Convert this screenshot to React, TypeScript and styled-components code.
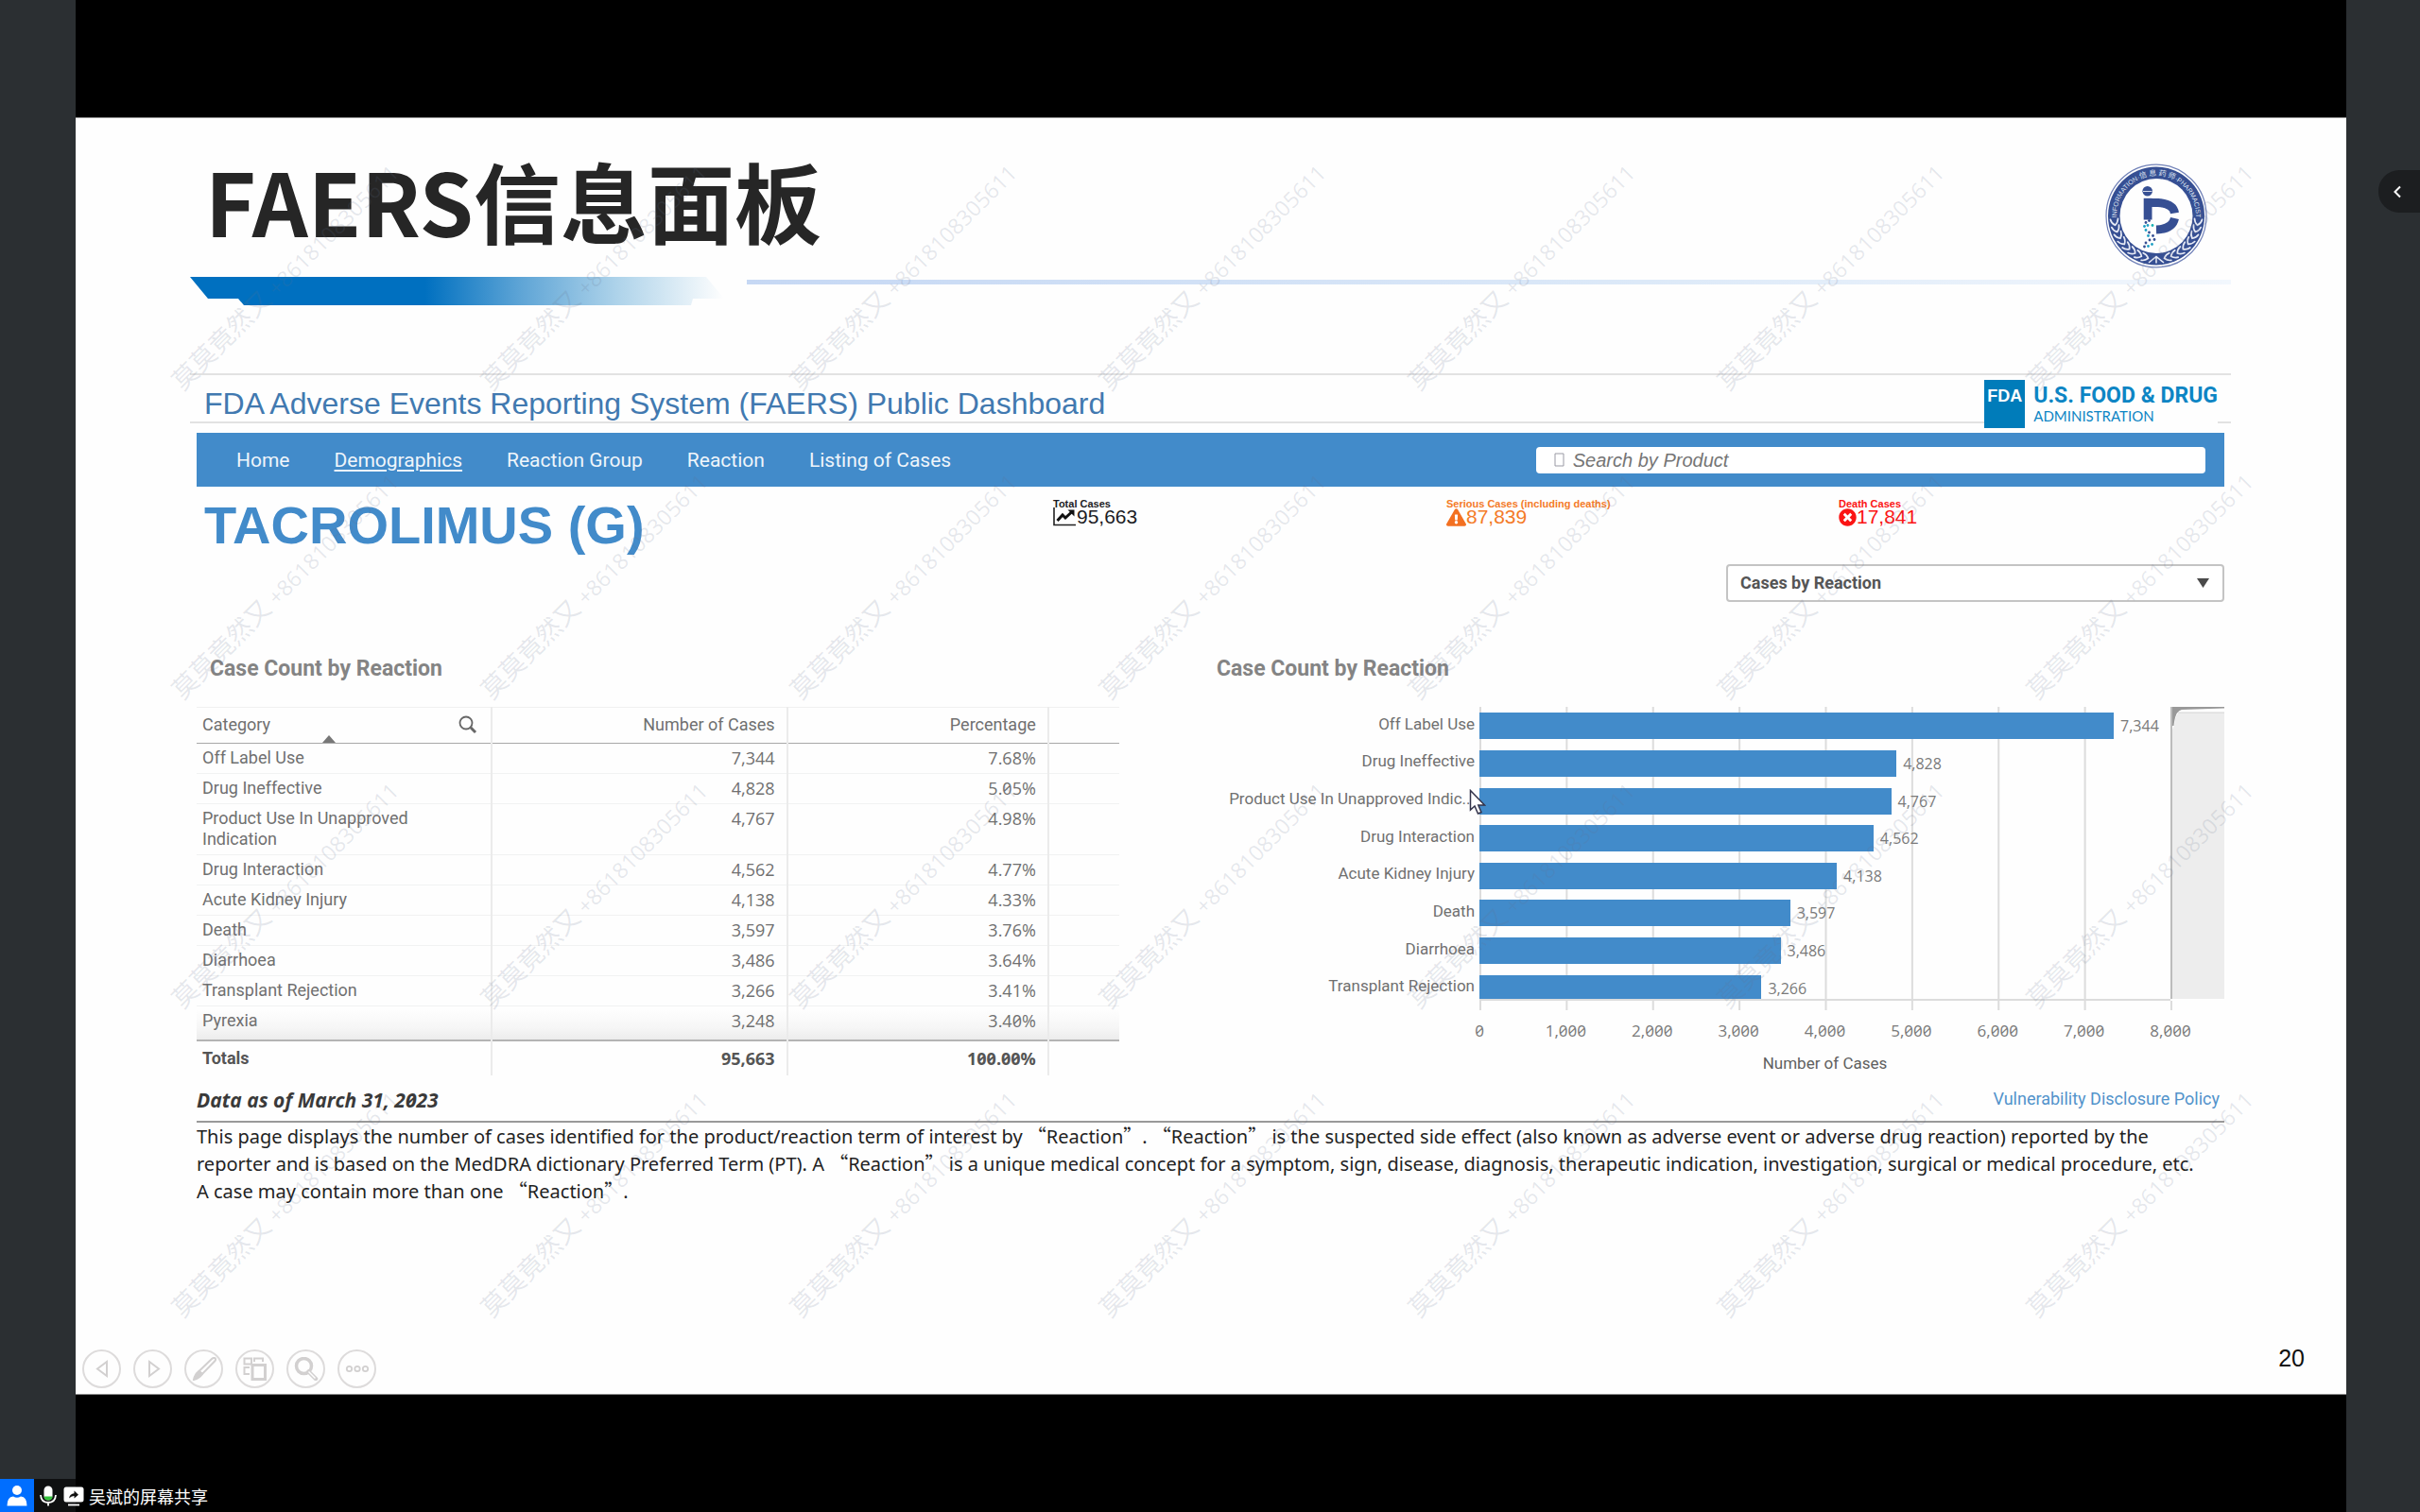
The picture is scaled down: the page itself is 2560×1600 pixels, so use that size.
import React from "react";
import styled, { createGlobalStyle } from "styled-components";
import { FaExclamationTriangle, FaTimesCircle } from "react-icons/fa";

const UI = `Roboto, "Noto Sans CJK SC", sans-serif`;
const ARIAL = `"Liberation Sans", Arial, sans-serif`;
const HUMANIST = `"Open Sans", "Noto Sans", sans-serif`;
const CJK = `"Noto Sans CJK SC", sans-serif`;
const BLUE = "#428bca";

const GlobalStyle = createGlobalStyle`
  *, *::before, *::after { box-sizing: border-box; }
  body { margin: 0; background: #2b2f32; font-family: ${UI}; }
  h1, h2, h3, p, ul, ol, dl, dd { margin: 0; padding: 0; }
  ul, ol { list-style: none; }
  button { font: inherit; padding: 0; border: 0; cursor: pointer; }
`;

const Meeting = styled.div`
  position: relative;
  display: grid;
  grid-template-columns: 80px minmax(0, 1fr) 78px;
  min-height: 100vh;
`;

const Stage = styled.main`
  grid-column: 2;
  display: flex;
  flex-direction: column;
  justify-content: center;
  background: #000;
`;

const Slide = styled.article`
  position: relative;
  display: flex;
  flex-direction: column;
  aspect-ratio: 16 / 9;
  padding-top: 40px;
  background: #fefefe;
  border: solid #8a8a8a;
  border-width: 1px 0;
`;

/* ---------- slide heading ---------- */

const SlideHeader = styled.header`
  display: flex;
  justify-content: space-between;
  align-items: flex-start;
  height: 128px;
  padding: 0 147px 0 137px;
`;

const SlideTitle = styled.h1`
  font: bold 92px/92px ${CJK};
  color: #262626;
`;

const SealWrap = styled.div`
  padding-top: 8px;
`;

const Ribbon = styled.div`
  display: grid;
  grid-template-columns: 589px 1fr;
  padding: 0 122px 0 121px;
  height: 30px;

  svg { display: block; }
`;

const RibbonLine = styled.div`
  height: 5px;
  margin-top: 3px;
  background: linear-gradient(to right, #c6d8f4, #dce9f8 60%, #f2f7fd);
`;

/* ---------- dashboard ---------- */

const Dashboard = styled.section`
  padding: 72px 129px 0 128px;
`;

const Masthead = styled.header`
  display: flex;
  justify-content: space-between;
  height: 53px;
  margin: 0 -7px;
  padding: 5px 14px 0 15px;
  border: solid #e2e2e2;
  border-width: 2px 0;
`;

const MastTitle = styled.h2`
  font: normal 32px/38px ${ARIAL};
  padding-top: 6px;
  color: #4179b0;
`;

const FdaLogo = styled.div`
  display: flex;
  height: 51px;
  background: #fefefe;
`;

const FdaMark = styled.div`
  width: 43px;
  padding-top: 7px;
  background: #007cba;
  color: #fff;
  font: bold 18px/20px ${ARIAL};
  text-align: center;
`;

const FdaWords = styled.div`
  padding: 5px 0 0 9px;
  color: #0d85c4;
`;

const FdaName = styled.div`
  font: bold 23px/24px ${UI};
`;

const FdaSub = styled.div`
  font: 15px/18px Lato, sans-serif;
`;

const NavBar = styled.nav`
  display: flex;
  align-items: center;
  justify-content: space-between;
  height: 57px;
  margin-top: 10px;
  padding: 0 20px 0 42px;
  background: ${BLUE};
`;

const NavList = styled.ul`
  display: flex;
  gap: 47px;
`;

const NavLink = styled.a<{ $active?: boolean }>`
  font: 21px/28px ${UI};
  color: #eef5fb;
  text-decoration: ${(p) => (p.$active ? "underline" : "none")};
  text-underline-offset: 3px;
`;

const SearchBox = styled.label`
  display: flex;
  align-items: center;
  gap: 9px;
  width: 34%;
  height: 28px;
  padding-left: 19px;
  background: #fff;
  border-radius: 4px;

  svg { flex: none; }
`;

const SearchInput = styled.input`
  flex: 1;
  min-width: 0;
  padding: 0;
  border: 0;
  outline: 0;
  background: none;
  font: italic 20px/26px ${ARIAL};

  &::placeholder { color: #757575; opacity: 1; }
`;

const Summary = styled.div`
  display: grid;
  grid-template-columns: 906fr 416fr 415fr 408fr;
  padding-top: 12px;
`;

const Drug = styled.h2`
  padding-left: 8px;
  font: bold 56px/58px ${ARIAL};
  color: ${BLUE};
`;

const Kpi = styled.dl<{ $color: string }>`
  color: ${(p) => p.$color};
`;

const KpiLabel = styled.dt`
  font: bold 11px/12px ${ARIAL};
`;

const KpiValue = styled.dd`
  display: flex;
  align-items: center;
  height: 16px;
  font: 21px/16px ${ARIAL};
`;

const SelectWrap = styled.div`
  position: relative;
  width: 527px;
  margin: 12px 0 0 auto;

  svg {
    position: absolute;
    right: 16px;
    top: 15px;
    pointer-events: none;
  }
`;

const Select = styled.select`
  appearance: none;
  width: 100%;
  height: 40px;
  padding: 0 13px;
  border: 2px solid #c4c4c4;
  border-radius: 4px;
  background: #fff;
  color: #555;
  font: bold 18px/24px ${UI};
`;

const Panels = styled.div`
  display: grid;
  grid-template-columns: 976fr 1066fr;
  column-gap: 103px;
  margin-top: 57px;
`;

const PanelTitle = styled.h3<{ $inset?: boolean }>`
  margin-bottom: 26px;
  padding-left: ${(p) => (p.$inset ? "14px" : "0")};
  font: bold 23px/28px ${UI};
  color: #848484;
`;

/* ---------- table ---------- */

const Table = styled.table`
  width: 100%;
  table-layout: fixed;
  border-collapse: collapse;
  border-top: 1px solid #f0f0f0;
  color: #707070;
`;

const Head = styled.th<{ $num?: boolean }>`
  height: 38px;
  padding: 0 12px 2px 6px;
  border-right: 2px solid #ebebeb;
  border-bottom: 1px solid #a8a8a8;
  font: 18px/22px ${UI};
  text-align: ${(p) => (p.$num ? "right" : "left")};

  &:last-child { border-right: 0; }
`;

const HeadInner = styled.div`
  position: relative;
  display: flex;
  align-items: center;
  justify-content: space-between;
  height: 35px;
  padding-right: 2px;
`;

const SortMark = styled.span`
  position: absolute;
  left: 127px;
  bottom: -2px;
  border: solid transparent;
  border-width: 0 7px 8px;
  border-bottom-color: #777;
`;

const Row = styled.tr<{ $fade?: boolean }>`
  background: ${(p) => (p.$fade ? "linear-gradient(#fefefe 10%, #f6f6f6 65%, #ececec)" : "none")};
  border-bottom: ${(p) => (p.$fade ? "2px solid #b4b4b4" : "1px solid #f1f2f2")};

  td { padding-bottom: ${(p) => (p.$fade ? "9px" : "5px")}; }
`;

const Cell = styled.td<{ $num?: boolean; $total?: boolean }>`
  height: 32px;
  padding: 4px ${(p) => (p.$num ? "12px" : "60px")} 5px 6px;
  border-right: 2px solid #ebebeb;
  vertical-align: top;
  font: ${(p) => (p.$total ? "bold" : "normal")} 18px/22px ${(p) => (p.$num ? HUMANIST : UI)};
  font-variant-numeric: slashed-zero;
  text-align: ${(p) => (p.$num ? "right" : "left")};

  &:last-child { border-right: 0; }
`;

const TotalsRow = styled.tr`
  color: #555;

  td { padding-top: 7px; padding-bottom: 7px; }
`;

/* ---------- chart ---------- */

const Chart = styled.div`
  display: grid;
  grid-template-columns: 278px 1fr 57px;
`;

const BarLabels = styled.ul`
  display: grid;
  grid-template-rows: repeat(8, 1fr);
  height: 317px;
`;

const BarLabel = styled.li`
  display: flex;
  align-items: center;
  justify-content: flex-end;
  padding: 0 5px 5px 0;
  font: 17px/22px ${UI};
  color: #707070;
  white-space: nowrap;
`;

const PlotColumn = styled.div`
  position: relative;
`;

const Plot = styled.div`
  height: 311px;
  overflow: hidden;
  background: linear-gradient(to right, #dcdcdc 2px, transparent 2px) 0 0 / 12.5% 100%;
  border-bottom: 2px solid #dcdcdc;
`;

const Bars = styled.ul`
  display: grid;
  grid-template-rows: repeat(8, 1fr);
  height: 317px;
`;

const BarRow = styled.li`
  display: flex;
  align-items: center;
  gap: 7px;
`;

const Bar = styled.div`
  height: 28px;
  background: ${BLUE};
`;

const BarValue = styled.span`
  font: 16px/20px ${HUMANIST};
  color: #7a7a7a;
`;

const Ticks = styled.div`
  height: 10px;
  margin-right: -2px;
  background: linear-gradient(to right, #dcdcdc 2px, transparent 2px) 0 0 / calc((100% - 2px) / 8) 100%;
`;

const TickLabels = styled.ol`
  display: grid;
  grid-template-columns: repeat(9, 1fr);
  margin: 10px -6.25% 0;
  font: 17px/24px ${HUMANIST};
  font-variant-numeric: slashed-zero;
  color: #7a7a7a;
  text-align: center;
`;

const AxisTitle = styled.p`
  margin-top: 10px;
  font: 17px/24px ${UI};
  color: #606060;
  text-align: center;
`;

const MiniMap = styled.div`
  height: 309px;
  background: #ededed;
  border-left: 2px solid #bcbcbc;

  svg { display: block; }
`;

const Pointer = styled.svg`
  position: absolute;
  left: -11px;
  top: 87px;
`;

/* ---------- notes ---------- */

const Stamp = styled.div`
  display: flex;
  justify-content: space-between;
  height: 38px;
  margin-top: 12px;
  border-bottom: 2px solid #999;
`;

const StampDate = styled.p`
  font: italic bold 21px/28px ${HUMANIST};
  font-variant-numeric: slashed-zero;
  color: #3a3a3a;
`;

const PolicyLink = styled.a`
  padding-right: 5px;
  font: 18px/26px ${UI};
  color: #5293cb;
  text-decoration: none;
`;

const Note = styled.p`
  font: 20px/28px "Noto Sans", sans-serif;
  color: #222;
`;

const Quote = styled.span`
  font-family: ${CJK};
`;

/* ---------- slide footer ---------- */

const SlideFooter = styled.footer`
  display: flex;
  align-items: flex-end;
  justify-content: space-between;
  margin-top: auto;
  padding: 0 44px 6px 7px;
`;

const Controls = styled.div`
  display: flex;
  gap: 13px;
`;

const ControlButton = styled.button`
  display: grid;
  place-items: center;
  width: 41px;
  height: 41px;
  border: 2px solid #dddbdb;
  border-radius: 50%;
  background: transparent;
`;

const PageNumber = styled.span`
  padding-bottom: 18px;
  font: 25px/28px ${ARIAL};
  color: #111;
`;

/* ---------- watermark ---------- */

const Watermarks = styled.div`
  position: absolute;
  top: -34px;
  left: 117px;
  display: grid;
  grid-template-columns: repeat(7, 327px);
  grid-auto-rows: 327px;
  pointer-events: none;
`;

const WatermarkCell = styled.div`
  display: flex;
  align-items: flex-end;
  width: 327px;
`;

const WatermarkText = styled.span`
  flex: none;
  font: 23px/27px ${HUMANIST};
  color: rgba(100, 112, 140, 0.16);
  white-space: nowrap;
  transform: rotate(-45deg);
  transform-origin: left bottom;
`;

const WatermarkName = styled.span`
  font: 27px/27px ${CJK};
`;

/* ---------- meeting chrome ---------- */

const Expand = styled.button`
  position: absolute;
  top: 180px;
  right: 0;
  display: flex;
  align-items: center;
  width: 44px;
  height: 45px;
  padding-left: 14px;
  border-radius: 22px 0 0 22px;
  background: #1c1e20;
`;

const Sharer = styled.div`
  position: absolute;
  left: 0;
  bottom: 0;
  display: flex;
  align-items: center;
  height: 35px;
  padding-right: 8px;
  background: rgba(0, 0, 0, 0.65);
  color: #fff;
  font: 18px/24px ${CJK};
`;

const Avatar = styled.div`
  display: grid;
  place-items: center;
  width: 36px;
  height: 35px;
  background: #006eff;
`;

const SharerIcons = styled.div`
  display: flex;
  align-items: center;
  gap: 7px;
  padding: 0 5px 0 6px;
`;

/* ---------- data ---------- */

const navItems = ["Home", "Demographics", "Reaction Group", "Reaction", "Listing of Cases"];

const reactions = [
  { name: "Off Label Use", cases: 7344, share: "7.68%" },
  { name: "Drug Ineffective", cases: 4828, share: "5.05%" },
  { name: "Product Use In Unapproved Indication", short: "Product Use In Unapproved Indic...", cases: 4767, share: "4.98%" },
  { name: "Drug Interaction", cases: 4562, share: "4.77%" },
  { name: "Acute Kidney Injury", cases: 4138, share: "4.33%" },
  { name: "Death", cases: 3597, share: "3.76%" },
  { name: "Diarrhoea", cases: 3486, share: "3.64%" },
  { name: "Transplant Rejection", cases: 3266, share: "3.41%" },
  { name: "Pyrexia", cases: 3248, share: "3.40%" },
];

const AXIS_MAX = 8000;
const axisTicks = Array.from({ length: 9 }, (_, i) => i * 1000);
const fmt = (n: number) => n.toLocaleString("en-US");

/* ---------- drawings ---------- */

const NAVY = "#364f93";

/* Laurel leaves run up both sides of the ring from its lowest point. */
const laurel = Array.from({ length: 8 }, (_, i) => 8 + i * 9.5).flatMap((deg) =>
  [-1, 1].map((side) => ({
    x: 54 + side * Math.cos((deg * Math.PI) / 180) * 44.5,
    y: 55 + Math.sin((deg * Math.PI) / 180) * 45.5,
    turn: side * deg,
  }))
);

const helix: [number, number, string][] = [
  [43, 62, NAVY], [46.5, 60, NAVY], [41.5, 66, "#1f9fc4"], [45, 65, "#1f9fc4"], [50, 65, "#19b3b3"],
  [43, 70, "#1f9fc4"], [46.5, 72.5, NAVY], [50.5, 76, NAVY], [45.5, 76, "#1f9fc4"], [52, 80, NAVY],
  [47, 80.5, NAVY], [49.5, 85, "#1f9fc4"], [43, 83.5, NAVY], [41.5, 87.5, NAVY], [45.5, 87, "#1f9fc4"],
];

function Seal() {
  return (
    <svg width="108" height="111" viewBox="0 0 108 110" role="img" aria-label="信息药师">
      <defs>
        <path id="ring" d="M13 64 A42 42.5 0 1 1 95 64" />
      </defs>
      <ellipse cx="54" cy="55" rx="53" ry="54.4" fill="#fff" stroke="#7182b8" strokeWidth="1.2" />
      <ellipse cx="54" cy="55" rx="51" ry="52" fill={NAVY} />
      <ellipse cx="54" cy="55" rx="38.5" ry="39.5" fill="#fefefe" />
      <text fontFamily="Liberation Sans, sans-serif" fontSize="7" fill="#dfe4f2" textAnchor="middle">
        <textPath href="#ring" startOffset="50%">
          INFORMATION·<tspan fontFamily="Noto Sans CJK SC" fontSize="8">信 息 药 师</tspan>·PHARMACIST
        </textPath>
      </text>
      {laurel.map((leaf) => (
        <path
          key={leaf.turn}
          d="M-4 -3 Q-3.5 1 0 3.5 Q3.5 1 4 -3"
          transform={`translate(${leaf.x} ${leaf.y}) rotate(${leaf.turn})`}
          stroke="#e6eaf5"
          strokeWidth="1.7"
          strokeLinecap="round"
          fill="none"
        />
      ))}
      <path d="M46 104.5 L54 98 L62 104.5 M54 98 V105" stroke="#e6eaf5" strokeWidth="1.6" fill="none" />
      <circle cx="44.7" cy="28.7" r="5.3" fill={NAVY} />
      <path d="M40 29 H49.5" stroke="#fff" strokeWidth="0.8" />
      <path d="M40.7 36.3 H49.5 V59 H40.7 Z" fill={NAVY} />
      <path d="M45 41 H56 Q72 42 73.5 52" fill="none" stroke={NAVY} strokeWidth="9" />
      <path d="M73.5 57.5 Q71 69 54 69.5" fill="none" stroke={NAVY} strokeWidth="9" />
      {helix.map(([x, y, color]) => (
        <circle key={`${x}-${y}`} cx={x} cy={y} r="1.4" fill={color} />
      ))}
    </svg>
  );
}

function RibbonShape() {
  return (
    <svg width="570" height="30" viewBox="0 0 570 30" aria-hidden="true">
      <defs>
        <linearGradient id="rib" x1="0" x2="1">
          <stop offset="0.44" stopColor="#0070c0" />
          <stop offset="0.62" stopColor="#5fa5d6" />
          <stop offset="0.8" stopColor="#aed3ea" />
          <stop offset="1" stopColor="#fefefe" />
        </linearGradient>
      </defs>
      <path d="M0 0 H546 L565 23 H532 L530 30 H57 L51 23 H19 Z" fill="url(#rib)" />
    </svg>
  );
}

function TrendIcon() {
  return (
    <svg width="25" height="20" viewBox="0 0 25 20" aria-hidden="true">
      <path d="M1 0 V18.5 H24" fill="none" stroke="#222" strokeWidth="1.6" />
      <path d="M4.5 14 L10 8 L13 11 L19.5 5" fill="none" stroke="#111" strokeWidth="3" />
      <path d="M15.5 2.5 H22.5 V9.5 Z" fill="#111" />
    </svg>
  );
}

const stroke = { fill: "none", stroke: "#d2d0d0", strokeWidth: 2 };

const controls = [
  { label: "Previous", art: <path d="M18 5 V20 L8 12.5 Z" {...stroke} /> },
  { label: "Next", art: <path d="M9 5 V20 L19 12.5 Z" {...stroke} /> },
  {
    label: "Pen",
    art: (
      <g {...stroke}>
        <path d="M24 1 Q26 2 24.5 4 L11 18 L7.5 15 L21 2 Q22.5 0.5 24 1 Z" />
        <path d="M7.5 15 Q3 18 2 24 Q8 22.5 11 18 Z" fill="#d2d0d0" />
      </g>
    ),
  },
  {
    label: "All slides",
    art: (
      <g {...stroke}>
        <path d="M9 7.5 H1.5 V1.5 H9 Z M12 5 V1.5 H21 V5 M7 18 H1.5 V11 H7" />
        <path d="M10 8.5 H23.5 V23.5 H10 Z" strokeWidth="3" />
      </g>
    ),
  },
  {
    label: "Zoom",
    art: (
      <g {...stroke}>
        <circle cx="10.5" cy="9.5" r="8" strokeWidth="3.5" />
        <path d="M15.5 15.5 L23 23" strokeWidth="4.5" strokeLinecap="round" />
        <path d="M15.5 15.5 L22.5 22.5" stroke="#fefefe" strokeWidth="1.5" />
      </g>
    ),
  },
  {
    label: "More",
    art: (
      <g {...stroke} strokeWidth="1.8">
        <circle cx="4.5" cy="12.5" r="2.7" />
        <circle cx="13" cy="12.5" r="2.7" />
        <circle cx="21.5" cy="12.5" r="2.7" />
      </g>
    ),
  },
];

/* ---------- sections ---------- */

const NameCol = styled.col`
  width: 32%;
`;

const ShareCol = styled.col`
  width: 28.3%;
`;

function ReactionTable() {
  return (
    <Table>
      <colgroup>
        <NameCol />
        <NameCol />
        <ShareCol />
        <col />
      </colgroup>
      <thead>
        <tr>
          <Head scope="col">
            <HeadInner>
              Category
              <SortMark />
              <svg width="20" height="20" viewBox="0 0 20 20" fill="none" stroke="#666" aria-hidden="true">
                <circle cx="8" cy="8" r="6.5" strokeWidth="1.8" />
                <path d="M12.8 12.8 L18 18" strokeWidth="3" />
              </svg>
            </HeadInner>
          </Head>
          <Head scope="col" $num>Number of Cases</Head>
          <Head scope="col" $num>Percentage</Head>
          <Head aria-hidden="true" />
        </tr>
      </thead>
      <tbody>
        {reactions.map((r, i) => (
          <Row key={r.name} $fade={i === reactions.length - 1}>
            <Cell>{r.name}</Cell>
            <Cell $num>{fmt(r.cases)}</Cell>
            <Cell $num>{r.share}</Cell>
            <Cell />
          </Row>
        ))}
      </tbody>
      <tfoot>
        <TotalsRow>
          <Cell $total>Totals</Cell>
          <Cell $total $num>95,663</Cell>
          <Cell $total $num>100.00%</Cell>
          <Cell />
        </TotalsRow>
      </tfoot>
    </Table>
  );
}

function ReactionChart() {
  const shown = reactions.slice(0, 8);
  return (
    <Chart>
      <BarLabels>
        {shown.map((r) => (
          <BarLabel key={r.name}>{r.short ?? r.name}</BarLabel>
        ))}
      </BarLabels>
      <PlotColumn>
        <Plot>
          <Bars>
            {shown.map((r) => (
              <BarRow key={r.name}>
                <Bar style={{ width: `${(r.cases / AXIS_MAX) * 100}%` }} />
                <BarValue>{fmt(r.cases)}</BarValue>
              </BarRow>
            ))}
          </Bars>
        </Plot>
        <Ticks />
        <TickLabels>
          {axisTicks.map((t) => (
            <li key={t}>{fmt(t)}</li>
          ))}
        </TickLabels>
        <AxisTitle>Number of Cases</AxisTitle>
        <Pointer width="18" height="28" viewBox="0 0 18 28" aria-hidden="true">
          <path d="M1.5 1.5 V22 L6 18 L9.5 26 L13 24.5 L9.8 17 H16.5 Z" fill="#fff" stroke="#33334a" strokeWidth="1.5" />
        </Pointer>
      </PlotColumn>
      <MiniMap>
        <svg width="55" height="24" viewBox="0 0 55 24" aria-hidden="true">
          <path d="M0 0 H55 V6 H8 Q3 7 2 20 L0 24 Z" fill="#fff" />
          <path d="M0 0 H55 V1.5 L10 3 Q3 4 1.5 20 H0 Z" fill="#999" />
          <path d="M6 6 H55" stroke="#d4d4d4" strokeWidth="1" />
        </svg>
      </MiniMap>
    </Chart>
  );
}

function Reaction() {
  return (
    <>
      <Quote>“</Quote>Reaction<Quote>”</Quote>
    </>
  );
}

export default function App() {
  return (
    <Meeting>
      <GlobalStyle />
      <Stage>
        <Slide lang="zh-CN">
          <SlideHeader>
            <SlideTitle>FAERS信息面板</SlideTitle>
            <SealWrap>
              <Seal />
            </SealWrap>
          </SlideHeader>
          <Ribbon>
            <RibbonShape />
            <RibbonLine />
          </Ribbon>

          <Dashboard>
            <Masthead>
              <MastTitle>FDA Adverse Events Reporting System (FAERS) Public Dashboard</MastTitle>
              <FdaLogo>
                <FdaMark>FDA</FdaMark>
                <FdaWords>
                  <FdaName>U.S. FOOD &amp; DRUG</FdaName>
                  <FdaSub>ADMINISTRATION</FdaSub>
                </FdaWords>
              </FdaLogo>
            </Masthead>

            <NavBar>
              <NavList>
                {navItems.map((item) => (
                  <li key={item}>
                    <NavLink href="#" $active={item === "Demographics"}>
                      {item}
                    </NavLink>
                  </li>
                ))}
              </NavList>
              <SearchBox>
                <svg width="11" height="15" viewBox="0 0 11 15" aria-hidden="true">
                  <path d="M1 1 H10 V14 H1 Z" fill="none" stroke="#9a9aa4" />
                </svg>
                <SearchInput type="text" placeholder="Search by Product" aria-label="Search by Product" />
              </SearchBox>
            </NavBar>

            <Summary>
              <Drug>TACROLIMUS (G)</Drug>
              <Kpi $color="#1c1c24">
                <KpiLabel>Total Cases</KpiLabel>
                <KpiValue>
                  <TrendIcon />
                  95,663
                </KpiValue>
              </Kpi>
              <Kpi $color="#f47b28">
                <KpiLabel>Serious Cases (including deaths)</KpiLabel>
                <KpiValue>
                  <FaExclamationTriangle size={21} color="#f37021" />
                  87,839
                </KpiValue>
              </Kpi>
              <Kpi $color="#fb1414">
                <KpiLabel>Death Cases</KpiLabel>
                <KpiValue>
                  <FaTimesCircle size={19} />
                  17,841
                </KpiValue>
              </Kpi>
            </Summary>

            <SelectWrap>
              <Select aria-label="Dashboard view" defaultValue="reaction">
                <option value="reaction">Cases by Reaction</option>
              </Select>
              <svg width="13" height="10" viewBox="0 0 13 10" aria-hidden="true">
                <path d="M0 0 H13 L6.5 10 Z" fill="#4a4a4a" />
              </svg>
            </SelectWrap>

            <Panels>
              <section>
                <PanelTitle $inset>Case Count by Reaction</PanelTitle>
                <ReactionTable />
              </section>
              <section>
                <PanelTitle>Case Count by Reaction</PanelTitle>
                <ReactionChart />
              </section>
            </Panels>

            <Stamp>
              <StampDate>Data as of March 31, 2023</StampDate>
              <PolicyLink href="#">Vulnerability Disclosure Policy</PolicyLink>
            </Stamp>
            <Note>
              This page displays the number of cases identified for the product/reaction term of interest by <Reaction />. <Reaction /> is the
              suspected side effect (also known as adverse event or adverse drug reaction) reported by the
              <br />
              reporter and is based on the MedDRA dictionary Preferred Term (PT). A <Reaction /> is a unique medical concept for a symptom,
              sign, disease, diagnosis, therapeutic indication, investigation, surgical or medical procedure, etc.
              <br />A case may contain more than one <Reaction />.
            </Note>
          </Dashboard>

          <SlideFooter>
            <Controls>
              {controls.map((c) => (
                <ControlButton key={c.label} type="button" aria-label={c.label}>
                  <svg width="26" height="25" viewBox="0 0 26 25" aria-hidden="true">
                    {c.art}
                  </svg>
                </ControlButton>
              ))}
            </Controls>
            <PageNumber>20</PageNumber>
          </SlideFooter>

          <Watermarks aria-hidden="true">
            {Array.from({ length: 28 }, (_, i) => (
              <WatermarkCell key={i}>
                <WatermarkText>
                  <WatermarkName>莫莫竟然又</WatermarkName> +8618108305611
                </WatermarkText>
              </WatermarkCell>
            ))}
          </Watermarks>
        </Slide>
      </Stage>

      <Expand type="button" aria-label="Expand panel">
        <svg width="12" height="14" viewBox="0 0 12 14" fill="none" stroke="#fff" strokeWidth="2" aria-hidden="true">
          <path d="M9 1.5 L3.5 7 L9 12.5" />
        </svg>
      </Expand>

      <Sharer>
        <Avatar>
          <svg width="22" height="22" viewBox="0 0 22 22" fill="#fff" aria-hidden="true">
            <circle cx="11" cy="5" r="5" />
            <path d="M0.5 21.5 Q0.5 12 7 11.5 Q11 14 15 11.5 Q21.5 12 21.5 21.5 Z" />
          </svg>
        </Avatar>
        <SharerIcons>
          <svg width="18" height="22" viewBox="0 0 18 22" fill="none" aria-hidden="true">
            <rect x="4.5" y="0.5" width="9" height="15" rx="4.5" fill="#fff" />
            <path d="M4.5 11.5 H13.5 Q13.5 15.5 9 15.5 Q4.5 15.5 4.5 11.5 Z" fill="#35c23c" />
            <path d="M1 10 Q1.5 18 9 18 Q16.500 18 17 10 M9 18 V21.5" stroke="#fff" strokeWidth="1.8" />
          </svg>
          <svg width="22" height="22" viewBox="0 0 22 22" aria-hidden="true">
            <rect x="0.5" y="1.5" width="21" height="16" rx="2.5" fill="#fff" />
            <path d="M5 20.5 H17" stroke="#fff" strokeWidth="1.8" />
            <path d="M6 13.5 Q7 8.5 11.5 8.3 V5.5 L16 9.8 L11.5 13.5 V11 Q8.5 10.8 6 13.5 Z" fill="#111" />
          </svg>
        </SharerIcons>
        吴斌的屏幕共享
      </Sharer>
    </Meeting>
  );
}
